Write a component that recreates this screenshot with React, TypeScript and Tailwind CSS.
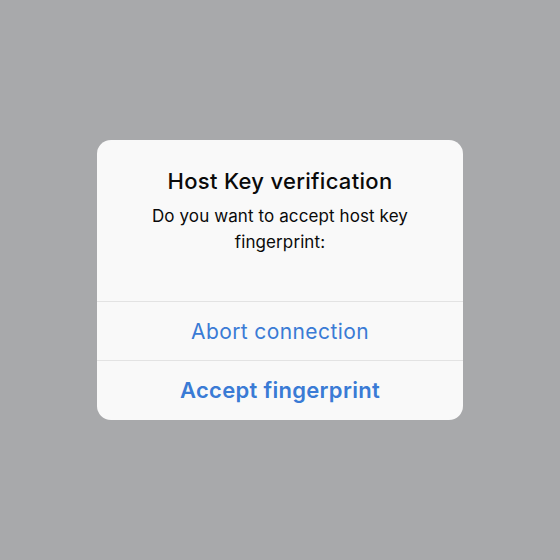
import React from "react";

export default function App() {
  return (
    <div
      className="w-[560px] h-[560px] bg-[#a8a9ab] flex items-center justify-center"
      style={{ fontFamily: "Inter, 'Noto Sans', sans-serif" }}
    >
      <div className="w-[366px] h-[280px] bg-[#f9f9f9] rounded-[14px] flex flex-col overflow-hidden">
        <div className="h-[161px] flex flex-col items-center pt-[27px] px-4 text-center">
          <h2 className="text-[22px] leading-[28px] font-medium text-[#0a0a0a] tracking-[0.3px]">
            Host Key verification
          </h2>
          <p className="mt-[8px] text-[17px] leading-[26px] text-[#0a0a0a] tracking-[0.1px]">
            Do you want to accept host key
            <br />
            fingerprint:
          </p>
        </div>
        <button className="h-[59px] pt-[2px] border-t border-[#e3e3e3] text-[21px] text-[#3a7bd5] tracking-[0.4px]">
          Abort connection
        </button>
        <button className="flex-1 border-t border-[#e3e3e3] text-[22px] font-semibold text-[#3a7bd5] tracking-[0.3px]">
          Accept fingerprint
        </button>
      </div>
    </div>
  );
}
